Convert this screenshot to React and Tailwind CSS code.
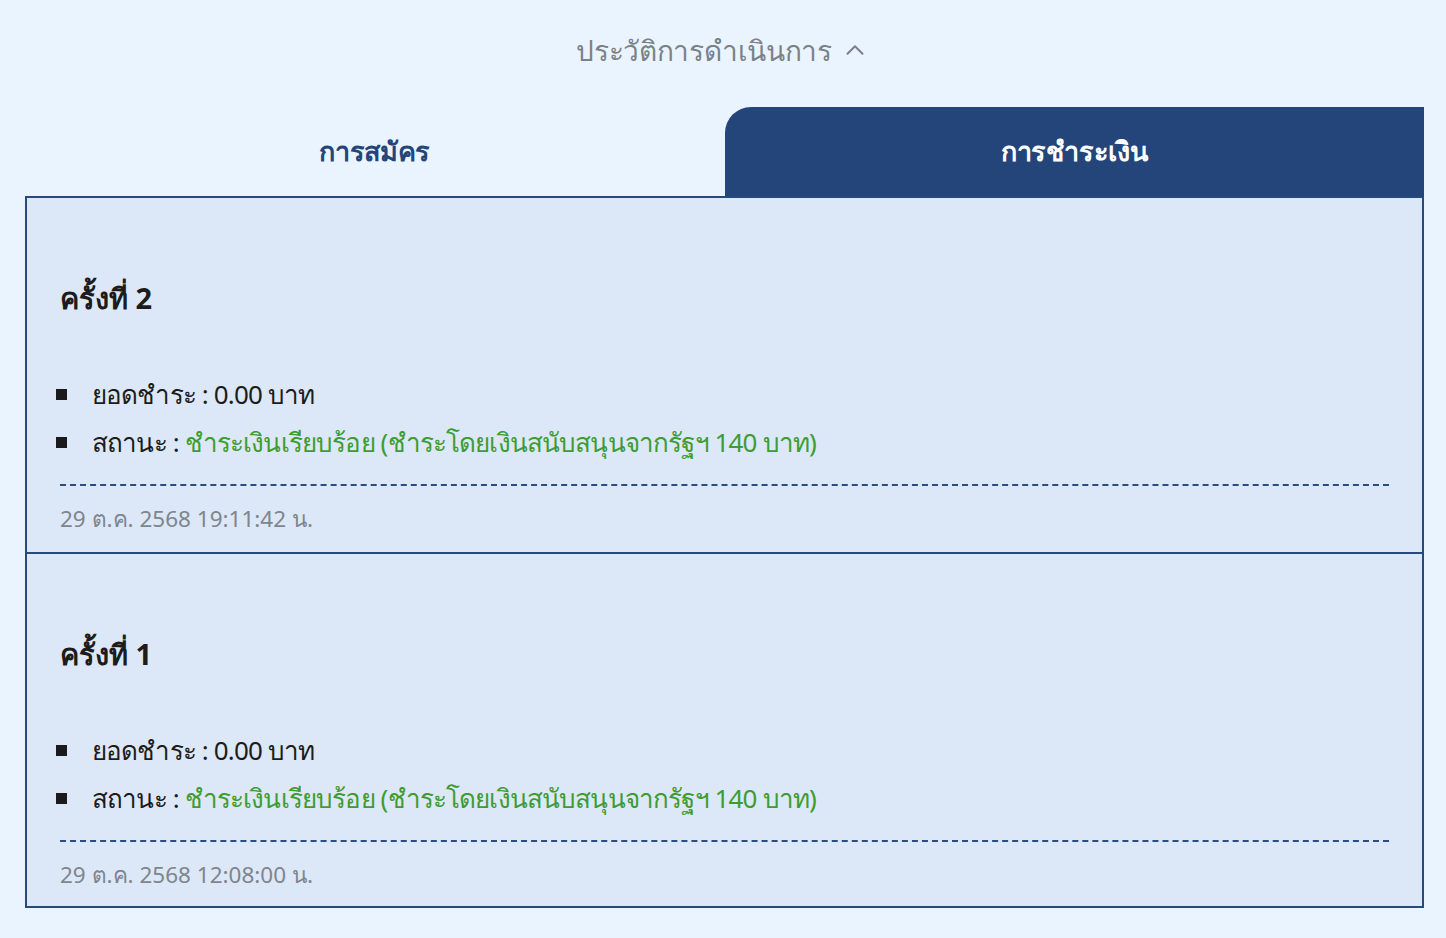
import { ChevronUp } from 'lucide-react';

const PAYMENTS = [
  { round: 2, amount: '0.00 บาท', status: 'ชำระเงินเรียบร้อย (ชำระโดยเงินสนับสนุนจากรัฐฯ 140 บาท)', time: '29 ต.ค. 2568 19:11:42 น.' },
  { round: 1, amount: '0.00 บาท', status: 'ชำระเงินเรียบร้อย (ชำระโดยเงินสนับสนุนจากรัฐฯ 140 บาท)', time: '29 ต.ค. 2568 12:08:00 น.' },
];

function Bullet({ children }) {
  return (
    <li className="flex items-center h-12">
      <span className="w-[11px] h-[11px] bg-[#1a1a1a] mr-[25px] shrink-0"></span>
      <span>{children}</span>
    </li>
  );
}

export default function App() {
  return (
    <div
      className="min-h-screen bg-[#eaf4fe] text-[#1c1c1c] pb-[30px]"
      style={{ fontFamily: '"Noto Sans", "Liberation Sans", sans-serif' }}
    >
      {/* header */}
      <div className="h-[107px] flex items-center justify-center gap-2 text-[#7b8189] text-[28px] tracking-[-0.3px] pb-[7px]">
        <span>ประวัติการดำเนินการ</span>
        <ChevronUp size={30} strokeWidth={1.6} />
      </div>

      {/* tabs */}
      <div className="ml-[25px] mr-[22px] flex h-[89px]">
        <div className="flex-1 flex items-center justify-center text-[#24457a] font-bold text-[27px] tracking-[-0.3px]">การสมัคร</div>
        <div className="flex-1 flex items-center justify-center bg-[#24457a] text-white font-bold text-[27px] tracking-[-0.3px] rounded-tl-[26px]">
          การชำระเงิน
        </div>
      </div>

      {/* list */}
      <div className="ml-[25px] mr-[22px] border-2 border-[#284a7a] bg-[#dce8f7]">
        {PAYMENTS.map((p, i) => (
          <div key={p.round} className={`h-[354px] px-[33px] flex flex-col ${i > 0 ? 'border-t-2 border-[#284a7a]' : ''}`}>
            <div className="pt-[80px] font-bold text-[29px] leading-[40px]">ครั้งที่ {p.round}</div>
            <ul className="mt-[52px] text-[26px] tracking-[-0.85px] -ml-[4px]">
              <Bullet>ยอดชำระ : {p.amount}</Bullet>
              <Bullet>
                สถานะ : <span className="text-[#3e9c32]">{p.status}</span>
              </Bullet>
            </ul>
            <div className="mt-[18px] border-t-2 border-dashed border-[#2b4d80]"></div>
            <div className="mt-[18px] text-[22.5px] text-[#7f858d] leading-[30px]">{p.time}</div>
          </div>
        ))}
      </div>
    </div>
  );
}
